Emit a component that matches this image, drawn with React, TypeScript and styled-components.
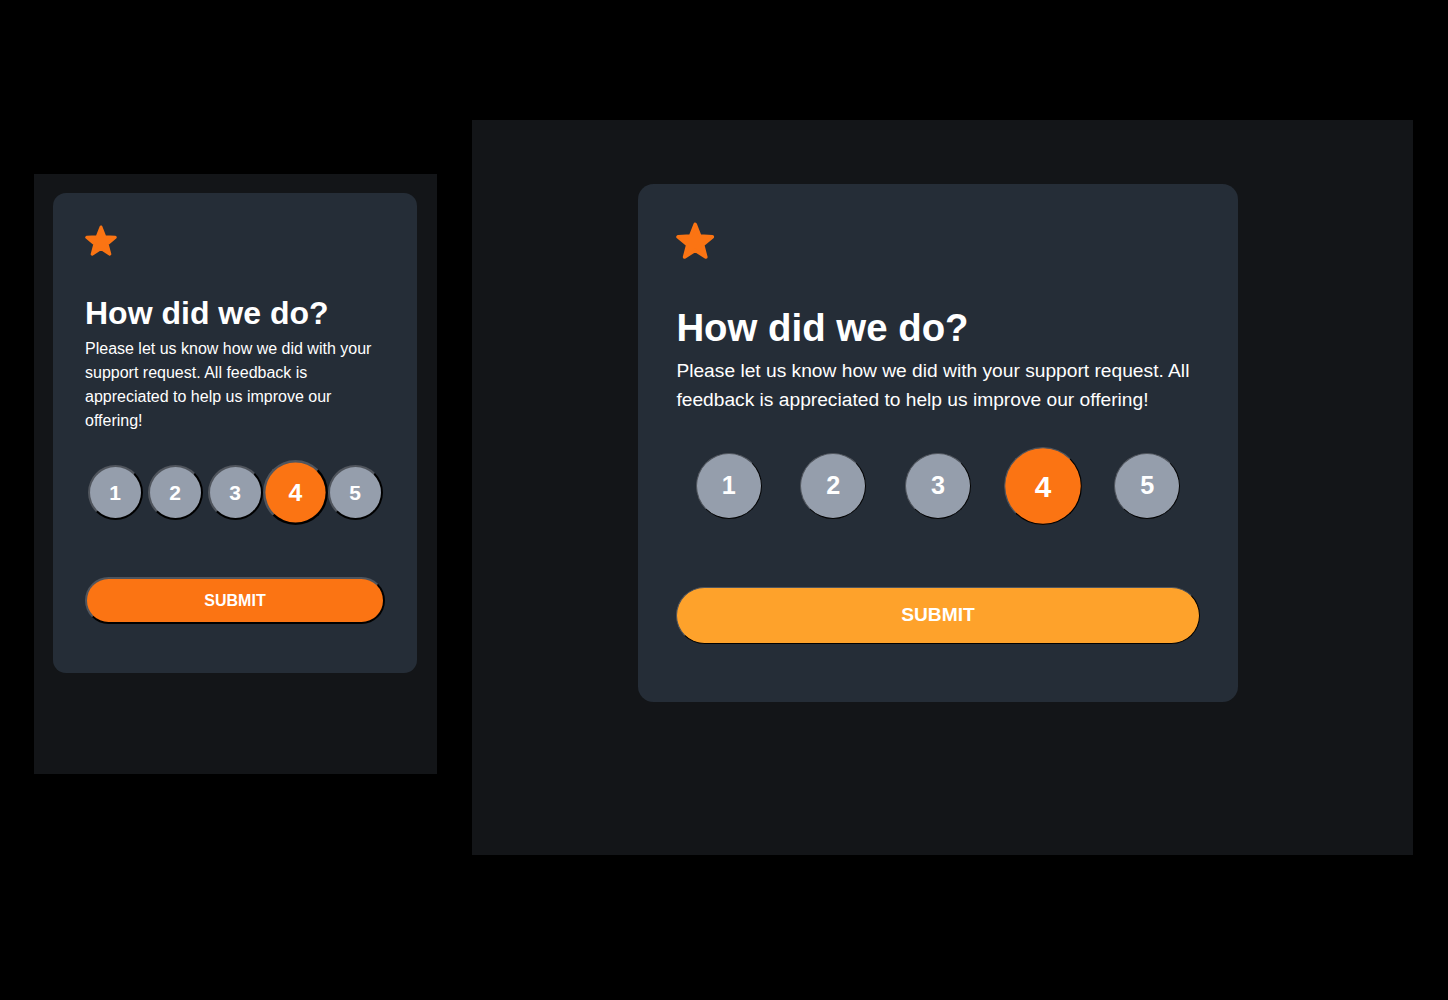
import React from 'react';
import styled, { createGlobalStyle } from 'styled-components';

const GlobalStyle = createGlobalStyle`
  html, body {
    margin: 0;
    padding: 0;
    background: #000000;
  }
  body {
    font-family: "Liberation Sans", Arial, sans-serif;
    width: 1448px;
    height: 1000px;
    overflow: hidden;
  }
`;

const Stage = styled.div`
  display: flex;
  align-items: flex-start;
  gap: 35px;
  padding: 120px 0 0 34px;
  box-sizing: border-box;
  height: 1000px;
`;

const MobileFrame = styled.section`
  margin-top: 54px;
  width: 403px;
  height: 600px;
  box-sizing: border-box;
  padding: 19px 20px 0 19px;
  background: #131518;
`;

const DesktopFrame = styled.section`
  width: 941px;
  height: 735px;
  box-sizing: border-box;
  padding: 64px 0 0 166px;
  background: #131518;
`;

const Card = styled.div<{ $width: number; $zoom?: number }>`
  width: ${(p) => p.$width}px;
  zoom: ${(p) => p.$zoom ?? 1};
  box-sizing: border-box;
  padding: 32px 32px 49px;
  background: #252d37;
  border-radius: 13px;
  display: flex;
  flex-direction: column;
`;

const StarIcon = styled.svg`
  display: block;
  width: 32px;
  height: 32px;
`;

const Title = styled.h1`
  margin: 38px 0 0;
  font-size: 32px;
  line-height: 36px;
  font-weight: 700;
  color: #ffffff;
`;

const Text = styled.p`
  margin: 6px 0 0;
  font-size: 16px;
  line-height: 24px;
  color: #ffffff;
`;

const RatingRow = styled.div`
  margin-top: 32px;
  display: flex;
  justify-content: space-around;
  align-items: center;
`;

const RateButton = styled.button<{ $active: boolean; $edge: number }>`
  width: 55px;
  height: 55px;
  padding: 0;
  border-radius: 50%;
  border-style: solid;
  border-width: ${(p) => p.$edge}px;
  border-color: #50555d #000000 #000000 #50555d;
  background: ${(p) => (p.$active ? '#fb7413' : '#959eac')};
  color: #ffffff;
  font-family: "Liberation Sans", Arial, sans-serif;
  font-size: 21px;
  font-weight: 700;
  display: flex;
  align-items: center;
  justify-content: center;
  transform: ${(p) => (p.$active ? 'scale(1.18)' : 'none')};
  cursor: pointer;
`;

const SubmitButton = styled.button<{ $tone: 'orange' | 'amber'; $edge: number }>`
  margin-top: 57px;
  width: 100%;
  height: 47px;
  border-radius: 999px;
  border-style: solid;
  border-width: ${(p) => p.$edge}px;
  border-color: #50555d #000000 #000000 #50555d;
  background: ${(p) => (p.$tone === 'orange' ? '#fb7413' : '#fea22b')};
  color: #ffffff;
  font-family: "Liberation Sans", Arial, sans-serif;
  font-size: 16px;
  font-weight: 700;
  text-transform: uppercase;
  cursor: pointer;
`;

const Star = () => (
  <StarIcon viewBox="0 0 32 32" aria-hidden="true">
    <polygon
      points="16,2 19.82,11.74 30.27,12.36 22.18,19.01 24.82,29.14 16,23.5 7.18,29.14 9.82,19.01 1.73,12.36 12.18,11.74"
      fill="#fb7413"
      stroke="#fb7413"
      strokeWidth="3"
      strokeLinejoin="round"
    />
  </StarIcon>
);

type RatingCardProps = {
  width: number;
  zoom?: number;
  tone: 'orange' | 'amber';
  edge: number;
};

const RatingCard = ({ width, zoom, tone, edge }: RatingCardProps) => (
  <Card $width={width} $zoom={zoom}>
    <Star />
    <Title>How did we do?</Title>
    <Text>
      Please let us know how we did with your support request. All feedback is
      appreciated to help us improve our offering!
    </Text>
    <RatingRow>
      {[1, 2, 3, 4, 5].map((n) => (
        <RateButton key={n} $active={n === 4} $edge={edge}>
          {n}
        </RateButton>
      ))}
    </RatingRow>
    <SubmitButton $tone={tone} $edge={edge}>
      Submit
    </SubmitButton>
  </Card>
);

export default function App() {
  return (
    <>
      <GlobalStyle />
      <Stage>
        <MobileFrame>
          <RatingCard width={364} tone="orange" edge={2} />
        </MobileFrame>
        <DesktopFrame>
          <RatingCard width={500} zoom={1.2} tone="amber" edge={1} />
        </DesktopFrame>
      </Stage>
    </>
  );
}
